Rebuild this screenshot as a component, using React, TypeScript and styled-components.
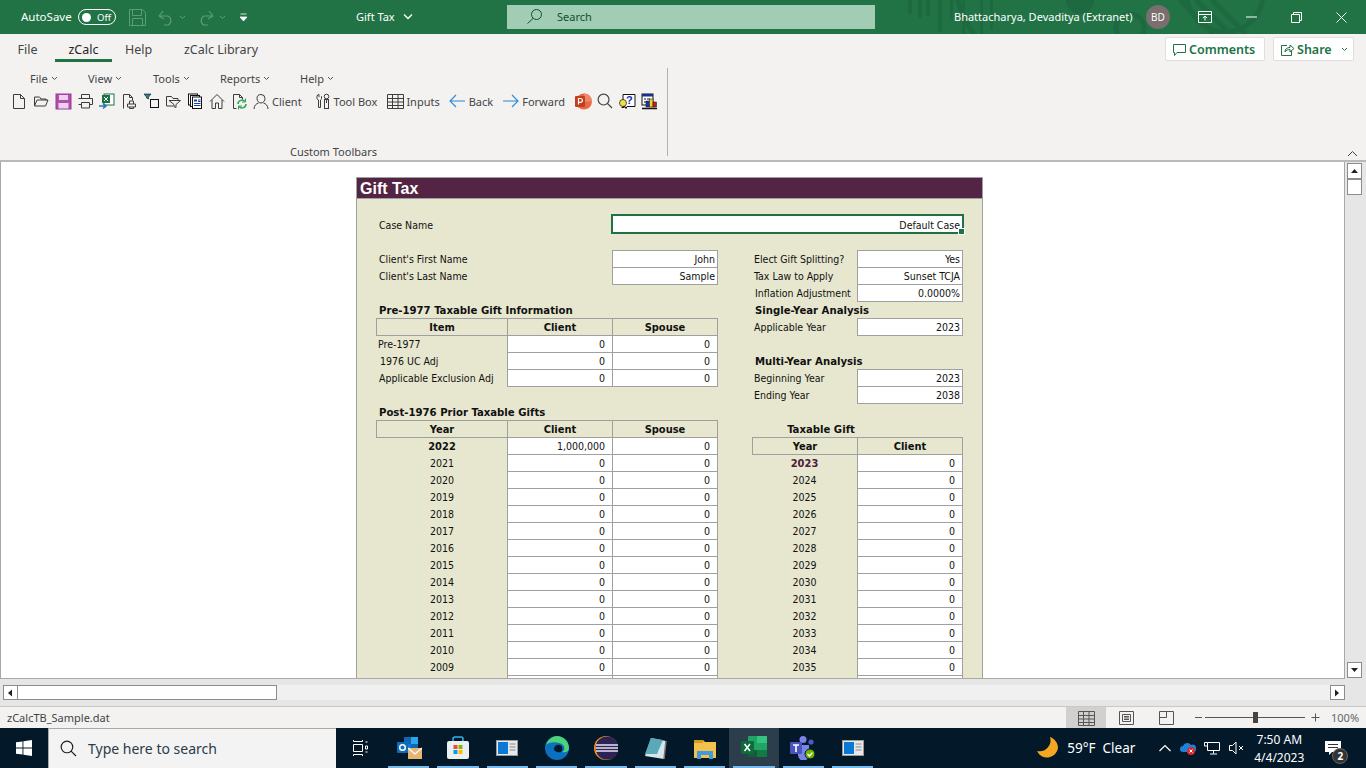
import React, { FC, ReactNode } from "react";
import styled, { createGlobalStyle } from "styled-components";

const Global = createGlobalStyle`
  html, body { margin: 0; padding: 0; height: 768px; overflow: hidden; background: #f3f2f1; }
  * { box-sizing: border-box; }
`;

const Page = styled.div`
  width: 1366px;
  height: 768px;
  display: flex;
  flex-direction: column;
  overflow: hidden;
  font-family: "Noto Sans", "Open Sans", sans-serif;
`;

const Gap = styled.span<{ $w: number }>`
  width: ${(p) => p.$w}px;
  flex: none;
`;

/* ---------- title bar ---------- */
const TitleBar = styled.div`
  position: relative;
  height: 34px;
  flex: none;
  background: #217346;
  display: flex;
  align-items: center;
  color: #fff;
  font-size: 11px;
  overflow: hidden;
`;
const Pattern = styled.svg`
  position: absolute;
  left: 880px;
  top: 0;
`;
const AutoSave = styled.span`
  position: relative;
  margin-left: 21px;
  padding-bottom: 2px;
  width: 50px;
  flex: none;
  font-size: 11.5px;
`;
const Toggle = styled.span`
  width: 38px;
  height: 16px;
  margin-left: 7px;
  flex: none;
  border: 1px solid #fff;
  border-radius: 8px;
  display: flex;
  align-items: center;
  padding-left: 3px;
  font-size: 9.5px;
  gap: 6px;
  &::before {
    content: "";
    width: 9px;
    height: 9px;
    border-radius: 50%;
    background: #fff;
  }
`;
const QuickIcons = styled.div`
  display: flex;
  align-items: center;
  margin-left: 13px;
  width: 227px;
  flex: none;
`;
const DocTitle = styled.div`
  width: 151px;
  padding-bottom: 2px;
  display: flex;
  align-items: center;
  gap: 8px;
  flex: none;
`;
const SearchBar = styled.div`
  width: 368px;
  height: 24px;
  padding: 0 0 2px 20px;
  background: #a0cdb4;
  display: flex;
  align-items: center;
  gap: 15px;
  color: #10502e;
  flex: none;
`;
const UserName = styled.div`
  position: relative;
  margin-left: 79px;
  padding-bottom: 2px;
  width: 192px;
  flex: none;
  white-space: nowrap;
`;
const Avatar = styled.div`
  position: relative;
  width: 24px;
  height: 24px;
  border-radius: 50%;
  background: #7a6e6e;
  font-size: 10px;
  display: flex;
  align-items: center;
  justify-content: center;
  flex: none;
`;
const WinButtons = styled.div`
  position: relative;
  display: flex;
  align-items: center;
  margin-left: 28px;
  gap: 34px;
`;

/* ---------- ribbon ---------- */
const Ribbon = styled.div`
  height: 126px;
  flex: none;
  background: #f3f2f1;
  position: relative;
  color: #444;
`;
const TabRow = styled.div`
  height: 30px;
  display: flex;
  align-items: flex-start;
  padding-left: 6px;
  font-size: 12.5px;
`;
const Tab = styled.div<{ $active?: boolean; $w: number }>`
  width: ${(p) => p.$w}px;
  height: 28px;
  line-height: 31px;
  text-align: center;
  flex: none;
  color: ${(p) => (p.$active ? "#252423" : "#444")};
  border-bottom: ${(p) => (p.$active ? "3px solid #217346" : "none")};
`;
const TabActions = styled.div`
  margin-left: auto;
  margin-top: 3px;
  margin-right: 12px;
  display: flex;
  gap: 8px;
`;
const ActionButton = styled.div<{ $w: number }>`
  width: ${(p) => p.$w}px;
  height: 24px;
  background: #fff;
  border: 1px solid #e1dfdd;
  border-radius: 2px;
  display: flex;
  align-items: center;
  padding-left: 7px;
  gap: 3px;
  color: #217346;
  font-size: 12.5px;
  font-weight: 600;
`;
const ShareCaret = styled.span`
  margin-left: 6px;
`;
const Group = styled.div`
  width: 668px;
  height: 88px;
  margin-top: 4px;
  border-right: 1px solid #b3b0ad;
  display: flex;
  flex-direction: column;
`;
const MenuRow = styled.div`
  display: flex;
  height: 20px;
  padding-left: 30px;
  font-size: 11px;
  align-items: center;
`;
const MenuItem = styled.span<{ $w: number }>`
  width: ${(p) => p.$w}px;
  display: flex;
  align-items: center;
  gap: 3px;
  flex: none;
`;
const Toolbar = styled.div`
  display: flex;
  align-items: center;
  height: 24px;
  margin-top: 1px;
  padding-left: 8px;
  font-size: 11px;
`;
const Tool = styled.span<{ $w?: number; $gap?: number; $ml?: number }>`
  width: ${(p) => (p.$w ? `${p.$w}px` : "auto")};
  margin-left: ${(p) => p.$ml ?? 0}px;
  display: flex;
  align-items: center;
  justify-content: ${(p) => (p.$w ? "center" : "flex-start")};
  gap: ${(p) => p.$gap ?? 3}px;
  flex: none;
`;
const GroupLabel = styled.div`
  margin-top: auto;
  text-align: center;
  font-size: 11px;
  line-height: 16px;
  margin-bottom: -4px;
  color: #444;
`;
const Collapse = styled.svg`
  position: absolute;
  right: 8px;
  bottom: 3px;
`;

/* ---------- sheet ---------- */
const SheetArea = styled.div`
  height: 519px;
  flex: none;
  display: flex;
  border-top: 2px solid #b9b9b9;
  background: #e6e6e6;
`;
const Sheet = styled.div`
  width: 1345px;
  height: 517px;
  flex: none;
  background: #fff;
  border-left: 1px solid #a8a8a8;
  border-right: 1px solid #a8a8a8;
  border-bottom: 1px solid #a8a8a8;
  overflow: hidden;
  padding: 15px 0 0 355px;
`;
const VScroll = styled.div`
  width: 21px;
  display: flex;
  flex-direction: column;
  padding: 1px 0 1px 2px;
  height: 517px;
`;
const ScrollButton = styled.div<{ $h?: number; $w?: number; $ml?: number }>`
  width: ${(p) => p.$w ?? 15}px;
  height: ${(p) => p.$h ?? 16}px;
  margin-left: ${(p) => p.$ml ?? 0}px;
  flex: none;
  background: #fff;
  border: 1px solid #8c8c8c;
  display: flex;
  align-items: center;
  justify-content: center;
`;
const Spacer = styled.div`
  flex: 1;
`;
const FormPanel = styled.div`
  width: 627px;
  background: #e7e7cf;
  border: 1px solid #a0a0a0;
  border-bottom: none;
  font-family: "Tahoma", "DejaVu Sans Condensed", "Liberation Sans", sans-serif;
  font-size: 10.5px;
  color: #111;
`;
const FormTitle = styled.div`
  height: 21px;
  background: #532443;
  color: #fff;
  font-family: "Liberation Sans", sans-serif;
  font-weight: bold;
  font-size: 16px;
  line-height: 22px;
  padding-left: 3px;
  border-bottom: 1px solid #a0a0a0;
`;
const Body = styled.div`
  padding: 15px 0 0 20px;
`;
const CaseRow = styled.div`
  display: flex;
  align-items: center;
  height: 20px;
  margin-bottom: 16px;
  padding-left: 2px;
`;
const CaseLabel = styled.div`
  width: 232px;
  flex: none;
  padding-top: 2px;
`;
const CaseBox = styled.div`
  position: relative;
  width: 353px;
  height: 20px;
  flex: none;
  background: #fff;
  border: 2px solid #1f7246;
  text-align: right;
  line-height: 19px;
  padding-right: 2px;
  &::after {
    content: "";
    position: absolute;
    right: -3px;
    bottom: -3px;
    width: 5px;
    height: 5px;
    background: #1f7246;
    border: 1px solid #fff;
  }
`;
const GridRow = styled.div`
  display: grid;
  grid-template-columns: 130px 105px 105px 35px 105px 105px;
  height: 17px;
  line-height: 19px;
`;
const Cell = styled.div<{ $col: number; $span?: number }>`
  grid-column: ${(p) => p.$col} / span ${(p) => p.$span ?? 1};
  white-space: nowrap;
  min-width: 0;
`;
const Text = styled(Cell)<{ $inset?: number }>`
  padding-left: ${(p) => p.$inset ?? 2}px;
`;
const Title = styled(Cell)<{ $inset?: number }>`
  font-weight: bold;
  font-size: 11.25px;
  padding-left: ${(p) => p.$inset ?? 2}px;
`;
const CenterTitle = styled(Cell)`
  font-weight: bold;
  font-size: 11.25px;
  text-align: center;
  padding-right: 72px;
`;
const YearText = styled(Cell)<{ $bold?: boolean; $red?: boolean }>`
  text-align: center;
  font-weight: ${(p) => (p.$bold ? "bold" : "normal")};
  font-size: ${(p) => (p.$bold ? "11px" : "inherit")};
  color: ${(p) => (p.$red ? "#4a2038" : "inherit")};
`;
const Boxed = styled(Cell)`
  height: 18px;
  margin-right: -1px;
  border: 1px solid #a0a0a0;
  line-height: 16px;
`;
const Head = styled(Boxed)<{ $first?: boolean }>`
  font-weight: bold;
  font-size: 11px;
  line-height: 17px;
  text-align: center;
  margin-left: ${(p) => (p.$first ? "-1px" : "0")};
`;
const Input = styled(Boxed)<{ $pad?: number }>`
  background: #fff;
  text-align: right;
  padding-right: ${(p) => p.$pad ?? 2}px;
`;

/* ---------- bottom bars ---------- */
const HScroll = styled.div`
  height: 28px;
  flex: none;
  background: #e6e6e6;
  padding: 6px 0 0 3px;
  border-bottom: 1px solid #c8c8c8;
`;
const HTrack = styled.div`
  height: 15px;
  width: 1342px;
  background: #f0f0f0;
  display: flex;
`;
const StatusBar = styled.div`
  height: 21px;
  flex: none;
  background: #f3f2f1;
  display: flex;
  align-items: center;
  padding-left: 7px;
  font-size: 11px;
  color: #444;
`;
const StatusName = styled.div`
  width: 1059px;
  flex: none;
`;
const ViewButton = styled.div<{ $active?: boolean }>`
  width: 40px;
  height: 21px;
  flex: none;
  display: flex;
  align-items: center;
  justify-content: center;
  background: ${(p) => (p.$active ? "#d2d0ce" : "transparent")};
`;
const ZoomControl = styled.div`
  display: flex;
  align-items: center;
  margin-left: 8px;
  gap: 2px;
`;
const SliderTrack = styled.div`
  position: relative;
  width: 100px;
  height: 1px;
  background: #555;
`;
const SliderThumb = styled.div`
  position: absolute;
  left: 48px;
  top: -5px;
  width: 5px;
  height: 11px;
  background: #444;
`;
const ZoomPct = styled.span`
  margin-left: 11px;
  color: #666;
`;
const Taskbar = styled.div`
  height: 40px;
  flex: none;
  background: #03192a;
  display: flex;
  align-items: center;
  color: #fff;
`;
const StartButton = styled.div`
  width: 48px;
  display: flex;
  justify-content: center;
  flex: none;
`;
const TaskSearch = styled.div`
  width: 288px;
  height: 40px;
  flex: none;
  background: #f3f3f3;
  border: 1px solid #a8a8a8;
  border-right: none;
  border-bottom: none;
  display: flex;
  align-items: center;
  padding-left: 11px;
  gap: 11px;
  color: #2b3a4a;
  font-size: 14px;
`;
const TaskView = styled.div`
  width: 48px;
  display: flex;
  justify-content: center;
  flex: none;
`;
const TaskApp = styled.div<{ $active?: boolean }>`
  position: relative;
  width: 49.33px;
  height: 40px;
  flex: none;
  display: flex;
  align-items: center;
  justify-content: center;
  background: ${(p) => (p.$active ? "#2c3d4b" : "transparent")};
  &::after {
    content: "";
    position: absolute;
    left: 4px;
    right: 4px;
    bottom: 0;
    height: 2px;
    background: #76b9ed;
  }
`;
const Weather = styled.div`
  margin-left: 159px;
  display: flex;
  align-items: center;
  gap: 8px;
  font-size: 13.5px;
  width: 123px;
  flex: none;
  white-space: pre;
`;
const Tray = styled.div`
  display: flex;
  align-items: center;
  gap: 8.5px;
  width: 88px;
  flex: none;
`;
const Clock = styled.div`
  width: 64px;
  text-align: center;
  font-size: 12px;
  line-height: 18px;
  flex: none;
  margin-top: 2px;
`;
const Notify = styled.div`
  position: relative;
  margin-left: 14px;
`;
const NotifyBadge = styled.span`
  position: absolute;
  left: 7px;
  top: 7px;
  width: 16px;
  height: 16px;
  border-radius: 50%;
  background: #333;
  border: 1px solid #666;
  font-size: 10px;
  font-weight: bold;
  line-height: 14px;
  text-align: center;
`;

/* ---------- icons ---------- */
const I: FC<{ w?: number; h?: number; children: ReactNode }> = ({ w = 16, h = 16, children }) => (
  <svg width={w} height={h} viewBox={`0 0 ${w} ${h}`} fill="none" style={{ display: "block", flex: "none" }}>
    {children}
  </svg>
);
const Caret: FC<{ color?: string }> = ({ color = "#555" }) => (
  <I w={7} h={5}>
    <path d="M1 1l2.500 2.500L6 1" stroke={color} />
  </I>
);
const stroke = "#3c3c3c";
const quick = "#5d9c7b";

const toolIcons: ReactNode[] = [
  <path key="a" d="M2.500 1.500h7l4 4v10h-11zM9.500 1.500v4h4" stroke={stroke} />,
  <path key="b" d="M1.500 13V4h5l1.500 2h5v1.500M1.500 13h11l2.500-6h-11z" stroke={stroke} />,
  <g key="c">
    <rect x="1" y="1" width="15" height="15" fill="#b04fb0" stroke="#963a96" />
    <rect x="4" y="2" width="9" height="5" fill="#ecd0ec" />
    <rect x="3.500" y="10" width="10" height="5.500" fill="#ecd0ec" />
  </g>,
  <path key="d" d="M4.500 5V1.500h8V5M1.500 5.500h14v6h-3M4.500 11.500h-3M4.500 9.500h8v5.500h-8z" stroke={stroke} />,
  <g key="e">
    <rect x="5" y="1" width="10" height="11" fill="#fff" stroke="#217346" />
    <rect x="3" y="2" width="8" height="8" fill="#1d7044" />
    <path d="M5 4l4 4M9 4L5 8" stroke="#fff" />
    <path d="M0 13h6M4 10.500L7 13l-3 2.500" stroke="#2e75b6" strokeWidth="1.600" />
  </g>,
  <path key="f" d="M2.500 15.500v-14h6l3 3v3M8.500 1.500v3h3M6.500 11h8v3h-8zM8.500 11V8h4v3M8.500 14v1.500h4V14" stroke={stroke} />,
  <g key="g">
    <path d="M1 1h7L5.500 4v2L3.500 5V4z" fill="#2a7f8e" stroke="#111" strokeWidth=".6" />
    <rect x="7.500" y="6.500" width="8" height="8" stroke="#111" />
  </g>,
  <path key="h" d="M1.500 13V3.500h5l1.500 2h5V8M1.500 13h7M4 7.500h11.500L11 11.500v3l-2-1v-2z" stroke={stroke} />,
  <g key="i">
    <rect x="1.500" y="1" width="9" height="11" fill="#fff" stroke="#111" />
    <rect x="3.500" y="2.500" width="9" height="11" fill="#fff" stroke="#111" />
    <rect x="5.500" y="4" width="9" height="11.500" fill="#fff" stroke="#111" />
    <path d="M7 6.500h3v2H7z" fill="#1a3fb0" />
    <path d="M11 7h2.500M11 8.500h2.500M7 10.500h6.500M7 12.500h6.500" stroke="#1a3fb0" />
  </g>,
  <path key="j" d="M1 8.500L8 1.500l7 7M3 7v8.500h3.500V10h3v5.500H13V7" stroke={stroke} />,
  <g key="k">
    <path d="M2.500 15.500v-14h6l3 3v2M8.500 1.500v3h3M2.500 15.500h3" stroke={stroke} />
    <path d="M7 11a4 4 0 0 1 7-2.500M15 11a4 4 0 0 1-7 2.500" stroke="#2da44e" strokeWidth="1.500" />
    <path d="M14.500 5.500v3.500H11M7.500 16.500V13H11" stroke="#2da44e" />
  </g>,
  <path key="l" d="M8 1.500a4 4 0 0 1 4 4c0 2.500-1.800 4.500-4 4.500S4 8 4 5.500a4 4 0 0 1 4-4zM1 16c0-3.500 2.500-5.500 4.500-6M15 16c0-3.500-2.500-5.500-4.500-6" stroke={stroke} />,
];
const ToolBoxIcon = () => (
  <I>
    <path d="M4 1.500a2 2 0 0 0-2 2v2a2 2 0 0 0 1.500 1.500v7.500h2V7a2 2 0 0 0 1-1.500v-2M4 1.500V4M6.500 3.500V4" stroke={stroke} />
    <rect x="9.500" y="6.500" width="4" height="9" stroke={stroke} />
    <circle cx="11.500" cy="3.500" r="2.300" stroke={stroke} />
    <path d="M11.500 6v4" stroke={stroke} />
  </I>
);
const GridIcon: FC<{ c?: string }> = ({ c = stroke }) => (
  <I w={17}>
    <path d="M.5 1.500h16v14H.5zM.5 5.500h16M.5 9h16M.5 12.500h16M5.500 1.500v14M11 1.500v14" stroke={c} />
  </I>
);
const ArrowIcon: FC<{ flip?: boolean }> = ({ flip }) => (
  <I>
    <path d={flip ? "M0 8h15M9 2l6 6-6 6" : "M16 8H1M7 2L1 8l6 6"} stroke="#2b88d8" strokeWidth="1.100" />
  </I>
);
const PptIcon = () => (
  <I w={17} h={17}>
    <circle cx="9" cy="8.500" r="8" fill="#e8694a" />
    <path d="M9 .5a8 8 0 0 1 8 8H9z" fill="#ed8a66" />
    <rect x="0" y="3" width="10" height="11" rx="1" fill="#c43e1c" />
    <path d="M3.500 11.500v-6h2a1.800 1.800 0 0 1 0 3.800h-2" stroke="#fff" strokeWidth="1.200" />
  </I>
);
const LensIcon: FC<{ c?: string; w?: number }> = ({ c = "#444", w = 16 }) => (
  <I w={w} h={w}>
    <circle cx={w * 0.41} cy={w * 0.41} r={w * 0.34} stroke={c} strokeWidth="1.200" />
    <path d={`M${w * 0.65} ${w * 0.65}L${w - 1} ${w - 1}`} stroke={c} strokeWidth="1.200" />
  </I>
);
const HelpIcon = () => (
  <I w={17} h={17}>
    <path d="M4 1.500h12v12H8l-1 2-1-2H4z" fill="#fff" stroke="#111" />
    <text x="7" y="11" fontSize="11" fontWeight="bold" fontFamily="Liberation Sans" fill="#1a2fb0">?</text>
    <circle cx="4" cy="10" r="3.500" fill="#efe04a" stroke="#111" strokeWidth=".7" />
    <path d="M2.500 14.500h3" stroke="#111" />
  </I>
);
const ChartIcon = () => (
  <I w={17} h={17}>
    <rect x="1" y="1" width="11" height="11" fill="#fff" stroke="#111" />
    <rect x="1" y="1" width="11" height="2.500" fill="#1a2f90" />
    <path d="M3 6h2M3 9h2M6 6h3" stroke="#111" />
    <rect x="5" y="8" width="3.500" height="6" fill="#1a2fc0" stroke="#111" strokeWidth=".5" />
    <rect x="8.500" y="6" width="3.500" height="8" fill="#f0d020" stroke="#111" strokeWidth=".5" />
    <rect x="12" y="9" width="3.500" height="5" fill="#c02020" stroke="#111" strokeWidth=".5" />
    <path d="M1 15.500h15" stroke="#111" strokeWidth="1.500" />
  </I>
);

const Triangle: FC<{ dir: "up" | "down" | "left" | "right" }> = ({ dir }) => {
  const d = { up: "M1 6l3.500-4L8 6z", down: "M1 2l3.500 4L8 2z", left: "M6 0.500L2 4l4 3.500z", right: "M2 0.500L6 4l-4 3.500z" }[dir];
  return (
    <I w={9} h={8}>
      <path d={d} fill="#222" />
    </I>
  );
};

const WindowApp = () => (
  <I w={22} h={20}>
    <rect x="0.500" y="2.500" width="21" height="15" fill="#e8e8e8" stroke="#9a9a9a" />
    <rect x="2" y="4" width="10" height="12" fill="#0a78d7" />
    <path d="M13.500 6h6M13.500 9h6M13.500 12h6" stroke="#8a8a8a" />
  </I>
);

const taskIcons: ReactNode[] = [
  <I key="outlook" w={26} h={24}>
    <rect x="8" y="1" width="14" height="14" fill="#1066b0" />
    <rect x="15" y="1" width="7" height="7" fill="#28a8ea" />
    <rect x="8" y="8" width="7" height="7" fill="#0a78d4" />
    <rect x="12" y="12" width="14" height="11" fill="#e6b675" />
    <path d="M12 12l7 6 7-6" stroke="#fff" strokeWidth="1.200" />
    <rect x="1" y="6" width="11" height="11" rx="1" fill="#0f6cbd" />
    <circle cx="6.500" cy="11.500" r="2.800" stroke="#fff" strokeWidth="1.500" />
  </I>,
  <I key="store" w={24} h={24}>
    <path d="M7 6V3a2 2 0 0 1 2-2h6a2 2 0 0 1 2 2v3" stroke="#2fb5e8" strokeWidth="1.500" />
    <rect x="1" y="5" width="22" height="18" rx="2" fill="#eceff1" />
    <rect x="7.500" y="9" width="4" height="4" fill="#e8502a" />
    <rect x="12.500" y="9" width="4" height="4" fill="#7fba00" />
    <rect x="7.500" y="14" width="4" height="4" fill="#0a9be8" />
    <rect x="12.500" y="14" width="4" height="4" fill="#ffb900" />
  </I>,
  <WindowApp key="w1" />,
  <I key="edge" w={24} h={24}>
    <circle cx="12" cy="12" r="12" fill="#0c70c0" />
    <path d="M1 9C3 3 8 0 12 0c6 0 12 5 12 12 0 4-4 5-7 4 3-1 3-5 1-7-4-3-12-4-17 0z" fill="#4bd27a" />
    <path d="M9 13c0-3 3-5 6-4 3 1 3 5 1 7-4 1-7-1-7-3z" fill="#03192a" />
  </I>,
  <I key="eclipse" w={24} h={24}>
    <circle cx="12" cy="12" r="12" fill="#f7941e" />
    <circle cx="13" cy="12" r="11.500" fill="#2c2255" />
    <path d="M2 9h22M1.500 12h23M2 15h22" stroke="#e8e4f0" strokeWidth="1.400" />
  </I>,
  <I key="notes" w={24} h={24}>
    <path d="M8 2l15 3-2 18-19-3z" fill="#d6e6ea" />
    <path d="M8 2l12 2-6 14H2z" fill="#5aa9b8" />
    <path d="M23 5l-2 18" stroke="#777" strokeWidth="1.500" />
  </I>,
  <I key="folder" w={24} h={22}>
    <path d="M1 3h9l2 2h11v16H1z" fill="#f2c14e" />
    <path d="M1 3h9v3H1z" fill="#d99a1c" />
    <path d="M4 22v-8h16v8h-4v-4H8v4z" fill="#3f9be0" />
  </I>,
  <I key="excel" w={26} h={24}>
    <rect x="7" y="0" width="19" height="21" rx="1" fill="#21a366" />
    <rect x="16" y="0" width="10" height="7" fill="#33c481" />
    <rect x="16" y="14" width="10" height="7" fill="#107c41" />
    <rect x="7" y="14" width="9" height="7" fill="#185c37" />
    <rect x="0" y="5" width="13" height="13" rx="1" fill="#0e6b3c" />
    <path d="M3.500 8l5.500 7M9 8l-5.500 7" stroke="#fff" strokeWidth="1.500" />
  </I>,
  <I key="teams" w={26} h={24}>
    <circle cx="13" cy="3.500" r="3.500" fill="#7b83eb" />
    <circle cx="21" cy="6" r="2.600" fill="#5059c9" />
    <path d="M8 9h11v10a5 5 0 0 1-11 0z" fill="#7b83eb" />
    <rect x="0" y="6" width="12" height="12" rx="1" fill="#4b53bc" />
    <path d="M3 9h6M6 9v7" stroke="#fff" strokeWidth="1.600" />
    <circle cx="20" cy="18" r="5" fill="#6bb700" stroke="#03192a" />
    <path d="M17.500 18l2 2 3-3.500" stroke="#fff" strokeWidth="1.200" />
  </I>,
  <WindowApp key="w2" />,
];

type Row = {
  left?: ReactNode;
  right?: ReactNode;
};

const money = (col: number, value: string) => (
  <Input key={col} $col={col} $pad={7}>
    {value}
  </Input>
);

const leftYears = [2022, 2021, 2020, 2019, 2018, 2017, 2016, 2015, 2014, 2013, 2012, 2011, 2010, 2009];
const rightYears = [null, 2023, 2024, 2025, 2026, 2027, 2028, 2029, 2030, 2031, 2032, 2033, 2034, 2035];

const topRows: Row[] = [
  {
    left: <><Text $col={1}>Client's First Name</Text><Input $col={3}>John</Input></>,
    right: <><Text $col={5}>Elect Gift Splitting?</Text><Input $col={6}>Yes</Input></>,
  },
  {
    left: <><Text $col={1}>Client's Last Name</Text><Input $col={3}>Sample</Input></>,
    right: <><Text $col={5}>Tax Law to Apply</Text><Input $col={6}>Sunset TCJA</Input></>,
  },
  {
    right: <><Text $col={5} $inset={3}>Inflation Adjustment</Text><Input $col={6}>0.0000%</Input></>,
  },
  {
    left: <Title $col={1} $span={3}>Pre-1977 Taxable Gift Information</Title>,
    right: <Title $col={5} $span={2} $inset={3}>Single-Year Analysis</Title>,
  },
  {
    left: <><Head $col={1} $first>Item</Head><Head $col={2}>Client</Head><Head $col={3}>Spouse</Head></>,
    right: <><Text $col={5}>Applicable Year</Text><Input $col={6}>2023</Input></>,
  },
  { left: <><Text $col={1} $inset={1}>Pre-1977</Text>{money(2, "0")}{money(3, "0")}</> },
  {
    left: <><Text $col={1} $inset={3}>1976 UC Adj</Text>{money(2, "0")}{money(3, "0")}</>,
    right: <Title $col={5} $span={2} $inset={3}>Multi-Year Analysis</Title>,
  },
  {
    left: <><Text $col={1}>Applicable Exclusion Adj</Text>{money(2, "0")}{money(3, "0")}</>,
    right: <><Text $col={5}>Beginning Year</Text><Input $col={6}>2023</Input></>,
  },
  { right: <><Text $col={5}>Ending Year</Text><Input $col={6}>2038</Input></> },
  { left: <Title $col={1} $span={3}>Post-1976 Prior Taxable Gifts</Title> },
  {
    left: <><Head $col={1} $first>Year</Head><Head $col={2}>Client</Head><Head $col={3}>Spouse</Head></>,
    right: <CenterTitle $col={5} $span={2}>Taxable Gift</CenterTitle>,
  },
];

const App: FC = () => (
  <Page>
    <Global />
    <TitleBar>
      <Pattern width="486" height="34" viewBox="0 0 486 34" fill="none">
        <g fill="#1e6a40">
          <path d="M28 0h4v14h-4zM38 0h4v18h-4zM46 0h4v16h-4zM58 0h4v32h-4zM70 0h3v20h-3zM82 0h3v34h-3zM100 0h3v34h-3zM110 0h3v30h-3z" />
          <circle cx="200" cy="0" r="14" />
        </g>
        <g stroke="#1e6a40" strokeWidth="5">
          <circle cx="250" cy="28" r="14" />
          <path d="M300 0l34 34M316 0l34 34M332 0l34 34M78 0c3 12 8 24 16 34" />
          <circle cx="345" cy="-6" r="38" />
        </g>
      </Pattern>
      <AutoSave>AutoSave</AutoSave>
      <Toggle>Off</Toggle>
      <QuickIcons>
        <I w={17} h={17}>
          <path d="M.5.5h13l3 3v13H.5zM3.500.5v6h9v-6M3.500 16.500v-7h10v7" stroke={quick} />
        </I>
        <Gap $w={12} />
        <I w={16} h={17}>
          <path d="M1 7h9a5 5 0 0 1 0 9H6M1 7l4-5M1 7l5 3" stroke={quick} strokeWidth="1.200" />
        </I>
        <Gap $w={5} />
        <Caret color={quick} />
        <Gap $w={12} />
        <I w={16} h={17}>
          <path d="M15 7H6a5 5 0 0 0 0 9h4M15 7l-4-5M15 7l-5 3" stroke={quick} strokeWidth="1.200" />
        </I>
        <Gap $w={5} />
        <Caret color={quick} />
        <Gap $w={13} />
        <I w={9} h={9}>
          <path d="M1.500 1h6M1 4h7L4.500 8z" stroke="#fff" fill="#fff" strokeWidth=".8" />
        </I>
      </QuickIcons>
      <DocTitle>
        Gift Tax
        <I w={10} h={7}>
          <path d="M1 1.500l4 4 4-4" stroke="#fff" strokeWidth="1.300" />
        </I>
      </DocTitle>
      <SearchBar>
        <I w={15} h={15}>
          <circle cx="9.500" cy="5.500" r="5" stroke="#10502e" />
          <path d="M6 9.500L.5 14.500" stroke="#10502e" />
        </I>
        Search
      </SearchBar>
      <UserName>Bhattacharya, Devaditya (Extranet)</UserName>
      <Avatar>BD</Avatar>
      <WinButtons>
        <I w={14} h={12}>
          <path d="M.5.5h13v11H.5zM.5 3.500h13M7 9.500V5M5 7l2-2 2 2" stroke="#fff" />
        </I>
        <I w={11} h={3}>
          <path d="M0 1h11" stroke="#fff" />
        </I>
        <I w={11} h={11}>
          <path d="M.5 2.500h8v8h-8zM2.500 2.500V.5h8v8h-2" stroke="#fff" />
        </I>
        <I w={11} h={11}>
          <path d="M.5.5l10 10M10.500.5l-10 10" stroke="#fff" />
        </I>
      </WinButtons>
    </TitleBar>

    <Ribbon>
      <TabRow>
        <Tab $w={43}>File</Tab>
        <Tab $w={6} />
        <Tab $w={57} $active>zCalc</Tab>
        <Tab $w={53}>Help</Tab>
        <Tab $w={112}>zCalc Library</Tab>
        <TabActions>
          <ActionButton $w={100}>
            <I w={13} h={13}>
              <path d="M.5 1.500h12v8H4l-2.500 3v-3h-1z" stroke="#217346" />
            </I>
            Comments
          </ActionButton>
          <ActionButton $w={81}>
            <I w={13} h={13}>
              <path d="M6 2.500H.5v10h10V8M4 9c0-3 2-4.500 5-4.500V2l4 3.500L9 9V6.500c-2 0-4 .5-5 2.500z" stroke="#217346" />
            </I>
            Share
            <ShareCaret><Caret color="#217346" /></ShareCaret>
          </ActionButton>
        </TabActions>
      </TabRow>
      <Group>
        <MenuRow>
          <MenuItem $w={58}>File <Caret /></MenuItem>
          <MenuItem $w={65}>View <Caret /></MenuItem>
          <MenuItem $w={67}>Tools <Caret /></MenuItem>
          <MenuItem $w={80}>Reports <Caret /></MenuItem>
          <MenuItem $w={50}>Help <Caret /></MenuItem>
        </MenuRow>
        <Toolbar>
          {toolIcons.map((icon, i) => (
            <Tool key={i} $w={22}>
              <I w={17} h={17}>{icon}</I>
            </Tool>
          ))}
          <Tool>Client</Tool>
          <Tool $gap={3} $ml={13}><ToolBoxIcon />Tool Box</Tool>
          <Tool $gap={2} $ml={10}><GridIcon />Inputs</Tool>
          <Tool $gap={4} $ml={9}><ArrowIcon />Back</Tool>
          <Tool $gap={3} $ml={10}><ArrowIcon flip />Forward</Tool>
          <Tool $w={22} $ml={7}><PptIcon /></Tool>
          <Tool $w={22}><LensIcon /></Tool>
          <Tool $w={22}><HelpIcon /></Tool>
          <Tool $w={22}><ChartIcon /></Tool>
        </Toolbar>
        <GroupLabel>Custom Toolbars</GroupLabel>
      </Group>
      <Collapse width="11" height="7" viewBox="0 0 11 7" fill="none">
        <path d="M1 6l4.500-4.500L10 6" stroke="#444" />
      </Collapse>
    </Ribbon>

    <SheetArea>
      <Sheet>
        <FormPanel>
          <FormTitle>Gift Tax</FormTitle>
          <Body>
            <CaseRow>
              <CaseLabel>Case Name</CaseLabel>
              <CaseBox>Default Case</CaseBox>
            </CaseRow>
            {topRows.map((r, i) => (
              <GridRow key={i}>
                {r.left}
                {r.right}
              </GridRow>
            ))}
            {leftYears.map((y, i) => {
              const ry = rightYears[i];
              return (
                <GridRow key={y}>
                  <YearText $col={1} $bold={i === 0}>{y}</YearText>
                  {money(2, i === 0 ? "1,000,000" : "0")}
                  {money(3, "0")}
                  {ry === null ? (
                    <>
                      <Head $col={5}>Year</Head>
                      <Head $col={6}>Client</Head>
                    </>
                  ) : (
                    <>
                      <YearText $col={5} $bold={i === 1} $red={i === 1}>{ry}</YearText>
                      {money(6, "0")}
                    </>
                  )}
                </GridRow>
              );
            })}
            <GridRow>
              <Input $col={2} />
              <Input $col={3} />
              <Input $col={6} />
            </GridRow>
          </Body>
        </FormPanel>
      </Sheet>
      <VScroll>
        <ScrollButton><Triangle dir="up" /></ScrollButton>
        <ScrollButton />
        <Spacer />
        <ScrollButton><Triangle dir="down" /></ScrollButton>
      </VScroll>
    </SheetArea>

    <HScroll>
      <HTrack>
        <ScrollButton $w={15} $h={15}><Triangle dir="left" /></ScrollButton>
        <ScrollButton $w={260} $h={15} $ml={-1} />
        <Spacer />
        <ScrollButton $w={15} $h={15}><Triangle dir="right" /></ScrollButton>
      </HTrack>
    </HScroll>

    <StatusBar>
      <StatusName>zCalcTB_Sample.dat</StatusName>
      <ViewButton $active><GridIcon c="#555" /></ViewButton>
      <ViewButton>
        <I w={15} h={14}>
          <path d="M.5.5h14v13H.5zM3.500 3.500h8v7h-8zM5 5.500h5M5 7h5M5 8.500h5" stroke="#555" />
        </I>
      </ViewButton>
      <ViewButton>
        <I w={15} h={14}>
          <path d="M.5.5h14v13H.5zM7.500.5v6h-7" stroke="#555" />
        </I>
      </ViewButton>
      <ZoomControl>
        <I w={9} h={9}><path d="M1 4.500h7" stroke="#555" /></I>
        <SliderTrack><SliderThumb /></SliderTrack>
        <Gap $w={2} />
        <I w={9} h={9}><path d="M.5 4.500h8M4.500.5v8" stroke="#555" /></I>
      </ZoomControl>
      <ZoomPct>100%</ZoomPct>
    </StatusBar>

    <Taskbar>
      <StartButton>
        <I>
          <path d="M0 2.300l6.500-.9v6.200H0zM7.400 1.300L16 0v7.600H7.400zM0 8.400h6.500v6.200L0 13.700zM7.400 8.400H16V16l-8.600-1.300z" fill="#fff" />
        </I>
      </StartButton>
      <TaskSearch>
        <LensIcon c="#222" w={17} />
        Type here to search
      </TaskSearch>
      <TaskView>
        <I w={16} h={16}>
          <path d="M1.500 0v1.500h9V0M1.500 4.500h9v7h-9zM1.500 16v-1.500h9V16M13.500 2h2M13.500 6h2v3h-2zM13.500 12h2" stroke="#fff" />
        </I>
      </TaskView>
      {taskIcons.map((icon, i) => (
        <TaskApp key={i} $active={i === 7}>{icon}</TaskApp>
      ))}
      <Weather>
        <I w={23} h={24}>
          <path d="M14 1a11 11 0 0 1-13 14 11 11 0 0 0 21-3c0-5-3-9-8-11z" fill="#f5a623" />
        </I>
        59°F  Clear
      </Weather>
      <Tray>
        <I w={12} h={8}><path d="M.5 7L6 1.500 11.500 7" stroke="#fff" strokeWidth="1.200" /></I>
        <I w={16} h={14}>
          <path d="M3 11a3 3 0 0 1 0-6 4.500 4.500 0 0 1 8-1 3.500 3.500 0 0 1 3 7z" fill="#1b84d8" />
          <circle cx="11" cy="10" r="4" fill="#d92b2b" />
          <path d="M9.500 8.500l3 3M12.500 8.500l-3 3" stroke="#fff" />
        </I>
        <I w={16} h={14}>
          <path d="M3.500 1.500h12v8h-12zM3.500 5H.5V1.500h3M9.500 9.500v3M6 13h7" stroke="#fff" />
        </I>
        <I w={15} h={14}>
          <path d="M.5 4.500h3L7 1v12L3.500 9.500h-3zM10 5l4 4M14 5l-4 4" stroke="#fff" />
        </I>
      </Tray>
      <Clock>7:50 AM<br />4/4/2023</Clock>
      <Notify>
        <I w={17} h={14}>
          <path d="M0 0h16v11H7l-3 3v-3H0z" fill="#fff" />
          <path d="M3 3.500h10M3 6.500h10" stroke="#333" />
        </I>
        <NotifyBadge>2</NotifyBadge>
      </Notify>
    </Taskbar>
  </Page>
);

export default App;
